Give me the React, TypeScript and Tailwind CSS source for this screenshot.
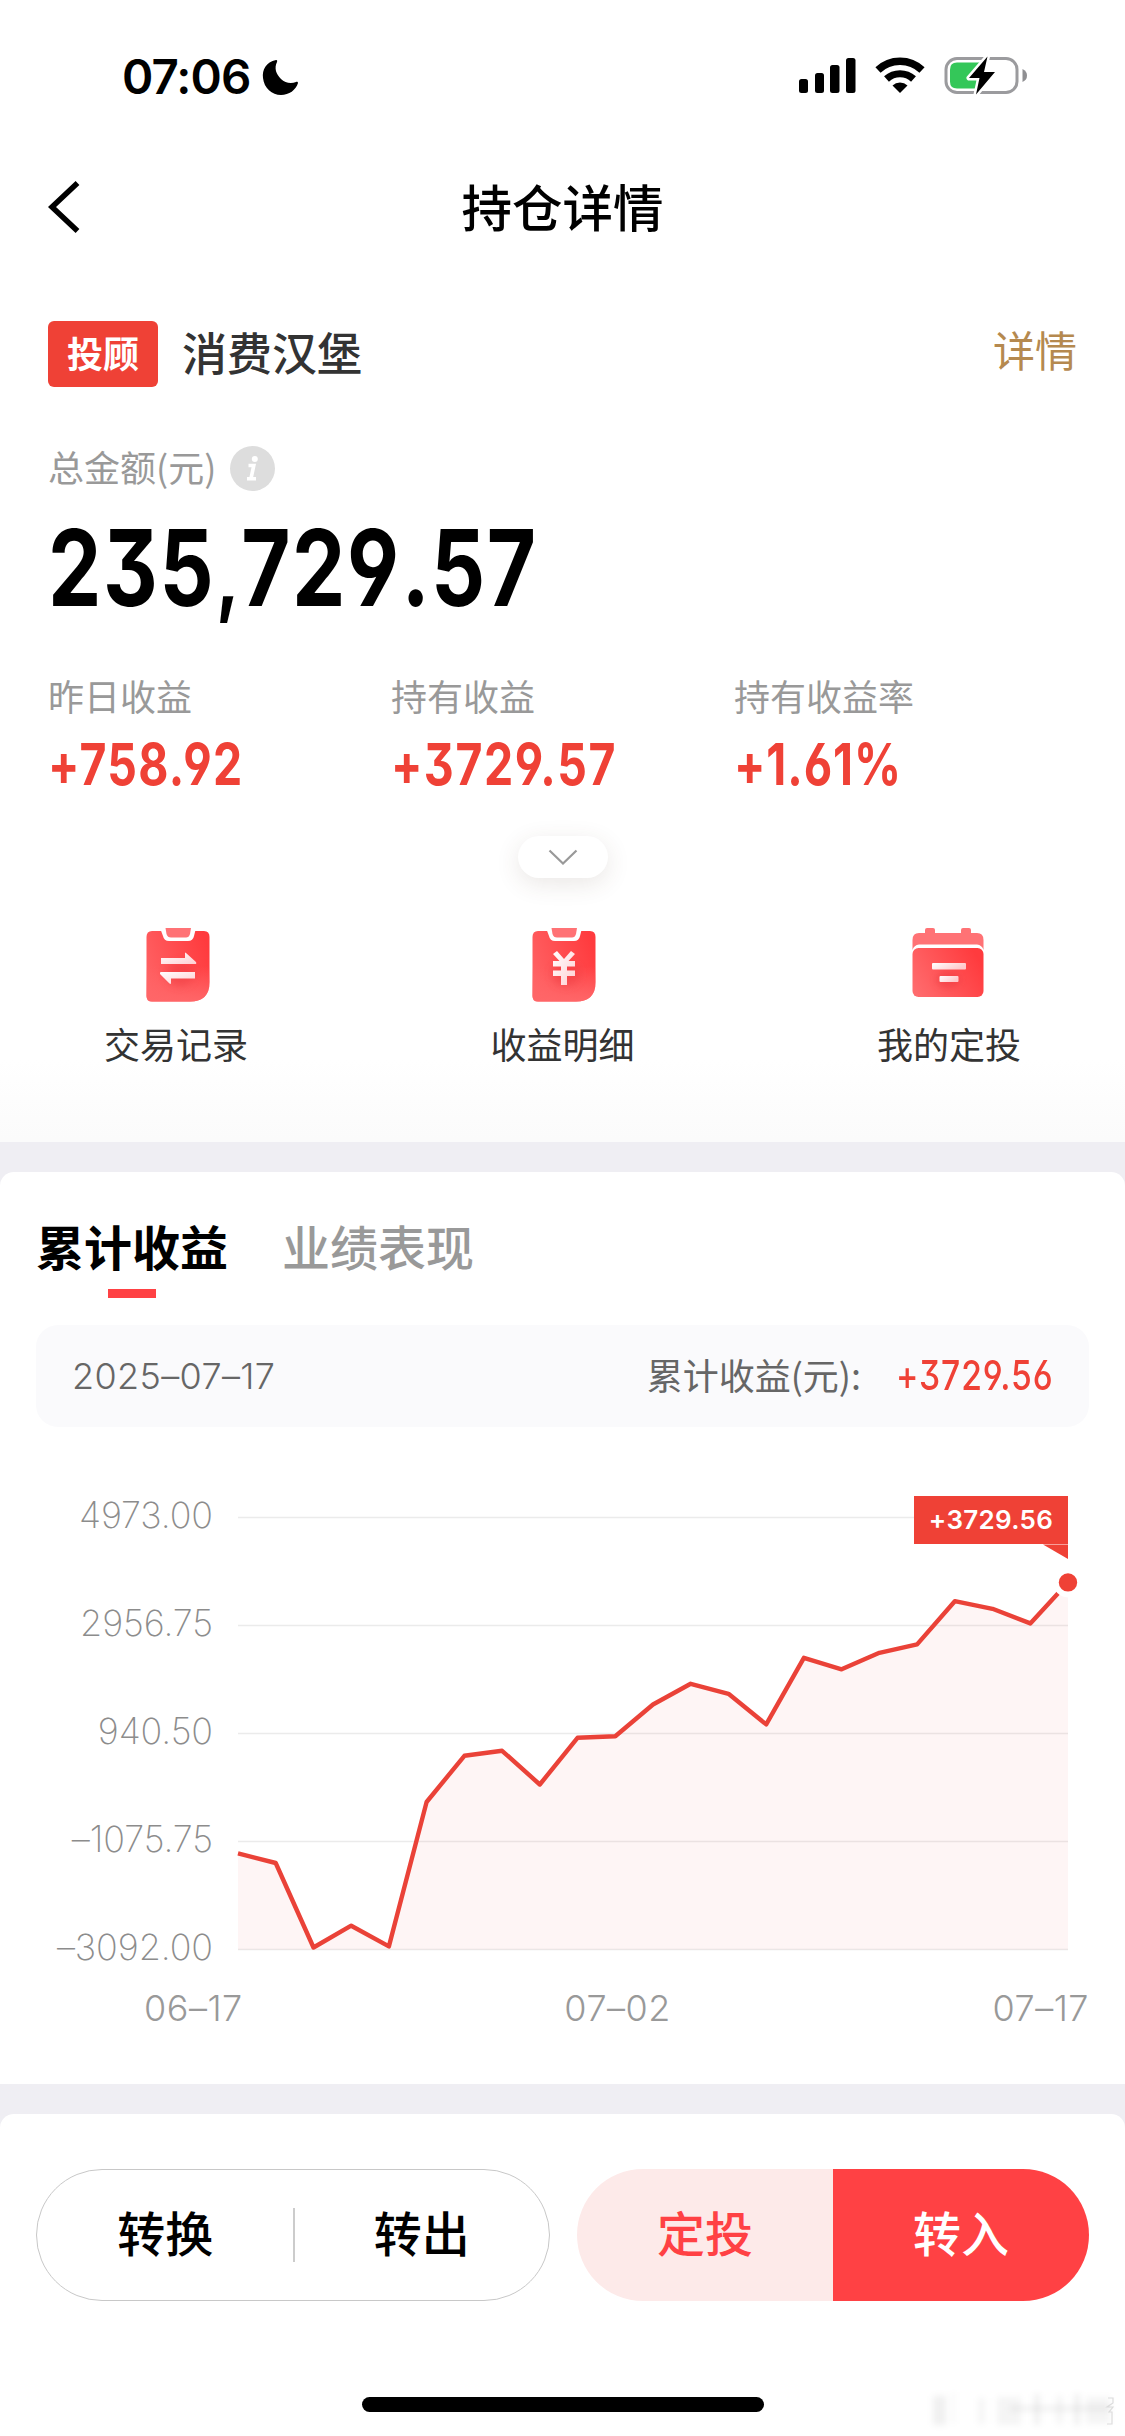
import type { ReactNode } from 'react';

const stats = [
  { label: '昨日收益', value: '+758.92', tracking: 'tracking-[1.6px]' },
  { label: '持有收益', value: '+3729.57', tracking: 'tracking-[2px]' },
  { label: '持有收益率', value: '+1.61%', tracking: 'tracking-[1.1px]' },
];

const yLabels = ['4973.00', '2956.75', '940.50', '–1075.75', '–3092.00'];

const CHART = { left: 238, right: 1068, top: 45.5, step: 108 };

// y offsets of the daily points, inside the chart area
const points = [
  381.4, 391, 475.5, 453.7, 474.4, 330, 283.8, 278.8, 312.5, 265.8, 264.3, 232.5,
  211.8, 221.8, 252.4, 185.8, 197.3, 180.8, 172.4, 129.2, 136.8, 151.4, 110.4,
];

const StatusBar = () => (
  <div className="flex h-[132px] items-start justify-between pl-[122px] pr-[97px] pt-[56px]">
    <div className="flex items-center">
      <span className="w-[139px] whitespace-nowrap pt-px font-['Inter'] text-[47.5px] font-[560] leading-[40px] tracking-[-0.9px]">
        07:06
      </span>
      <svg className="h-[38px] w-[38px]" viewBox="0 0 38 38">
        <path d="M15 2 C5 4 1 12 2 20 C3 30 11 37 20 37 C28 37 35 32 37 25 C37 24 36 23.500 35 24 C30 26 24 25 20 21 C15 16 13 10 16 4 C16.500 2.500 16 1.800 15 2Z" />
      </svg>
    </div>
    <div className="flex items-center">
      <svg className="h-[40px] w-[58px]" viewBox="0 0 58 40">
        <rect x="0" y="23" width="9" height="14" rx="2.500" />
        <rect x="16" y="17" width="9" height="20" rx="2.500" />
        <rect x="31" y="9" width="9.500" height="28" rx="2.500" />
        <rect x="47" y="2" width="9.500" height="35" rx="2.500" />
      </svg>
      <svg className="ml-[18px] h-[40px] w-[52px]" viewBox="0 0 52 40">
        <path d="M3 14 A32 32 0 0 1 47 14" fill="none" stroke="#000" strokeWidth="7.500" />
        <path d="M11.500 23 A20 20 0 0 1 38.500 23" fill="none" stroke="#000" strokeWidth="7.200" />
        <path d="M25 37 L17.500 29.500 A11 11 0 0 1 32.500 29.500Z" />
      </svg>
      <svg className="ml-[17px] h-[40px] w-[84px]" viewBox="0 0 84 40">
        <rect x="2" y="2.500" width="71" height="34" rx="11" fill="none" stroke="#9b9b9e" strokeWidth="3" />
        <path d="M78.500 13 Q83 15 83 19.500 Q83 24 78.500 26Z" fill="#8f8f92" />
        <path d="M13 6.500 H36 V32.500 H13 Q6 32.500 6 25.500 V13.500 Q6 6.500 13 6.500Z" fill="#34c759" />
        <path
          d="M43.500 0.500 L25 22 H35.500 L32 38.500 L51 16 H40Z"
          stroke="#fff"
          strokeWidth="5"
          strokeLinejoin="round"
          paintOrder="stroke"
        />
      </svg>
    </div>
  </div>
);

const ClipboardIcon = ({ id, children }: { id: string; children: ReactNode }) => (
  <svg className="ml-[3px] h-[74px] w-[64px]" viewBox="0 0 64 74">
    <defs>
      <linearGradient id={`${id}-body`} x1="0" y1="0.700" x2="1" y2="0.300">
        <stop offset="0" stopColor="#ff6264" />
        <stop offset="1" stopColor="#ff3b3e" />
      </linearGradient>
      <linearGradient id={`${id}-base`} x1="0" y1="0" x2="0" y2="1">
        <stop offset="0.500" stopColor="#ff6668" stopOpacity="0" />
        <stop offset="1" stopColor="#ff6668" />
      </linearGradient>
      <linearGradient id={`${id}-mark`} x1="0" y1="0" x2="1" y2="1">
        <stop offset="0" stopColor="#fff" />
        <stop offset="1" stopColor="#ffcfd2" />
      </linearGradient>
      <filter id={`${id}-blur`} x="-50%" y="-50%" width="200%" height="200%">
        <feGaussianBlur stdDeviation="4" />
      </filter>
    </defs>
    <path d="M6 3H58Q63.500 3 63.500 9V54Q63.500 73.500 44 73.500H6Q0.500 73.500 0.500 68V9Q0.500 3 6 3Z" fill={`url(#${id}-body)`} />
    <path d="M6 3H58Q63.500 3 63.500 9V54Q63.500 73.500 44 73.500H6Q0.500 73.500 0.500 68V9Q0.500 3 6 3Z" fill={`url(#${id}-base)`} />
    <path d="M14 0H50L48 8Q47 13 42 13H23Q18 13 17 8Z" fill="#fff" />
    <path d="M19.500 0H45L44 6Q43 9.500 40 9.500H25Q21.500 9.500 20.500 6Z" fill="#ff7275" />
    <ellipse cx="34" cy="46" rx="14" ry="12" fill="#e8343b" opacity="0.450" filter={`url(#${id}-blur)`} />
    <g fill={`url(#${id}-mark)`}>{children}</g>
  </svg>
);

const CalendarIcon = () => (
  <svg className="mr-[2px] h-[74px] w-[72px]" viewBox="0 0 72 74">
    <defs>
      <linearGradient id="cal-body" x1="0" y1="0.800" x2="1" y2="0.400">
        <stop offset="0" stopColor="#ff6b6d" />
        <stop offset="1" stopColor="#ff3b3e" />
      </linearGradient>
      <linearGradient id="cal-mark" x1="0" y1="0" x2="1" y2="0.400">
        <stop offset="0" stopColor="#fff" />
        <stop offset="1" stopColor="#ffc9cc" />
      </linearGradient>
      <filter id="cal-blur" x="-50%" y="-50%" width="200%" height="200%">
        <feGaussianBlur stdDeviation="3.500" />
      </filter>
    </defs>
    <path
      d="M13 5V2Q13 0 15 0H21Q23 0 23 2V5H49V2Q49 0 51 0H57Q59 0 59 2V5H65Q71.500 5 71.500 12V22Q70 17 65 16.500H7Q2 17 0.500 22V12Q0.500 5 7 5Z"
      fill="#ff7275"
    />
    <rect x="0.500" y="20" width="71" height="49" rx="6" fill="url(#cal-body)" />
    <ellipse cx="36" cy="52" rx="12" ry="8" fill="#e8343b" opacity="0.450" filter="url(#cal-blur)" />
    <rect x="20" y="35" width="34" height="6.500" rx="1" fill="url(#cal-mark)" />
    <rect x="27.500" y="48" width="19" height="6" rx="1" fill="url(#cal-mark)" />
  </svg>
);

const Action = ({ label, children }: { label: string; children: ReactNode }) => (
  <div className="flex w-[144px] flex-col items-center">
    {children}
    <span className="mt-[14px] whitespace-nowrap text-[36px] leading-[54px] text-[#333]">{label}</span>
  </div>
);

const Chart = () => {
  const stepX = (CHART.right - CHART.left) / (points.length - 1);
  const line = points.map((y, i) => `${(CHART.left + i * stepX).toFixed(1)},${y}`).join(' ');
  const bottom = CHART.top + CHART.step * 4;

  return (
    <div className="relative h-[500px]">
      <svg className="absolute inset-0 h-[500px] w-[1125px]" viewBox="0 0 1125 500">
        {yLabels.map((label, i) => (
          <line
            key={label}
            x1={CHART.left}
            x2={CHART.right}
            y1={CHART.top + i * CHART.step}
            y2={CHART.top + i * CHART.step}
            stroke="#ebebeb"
            strokeWidth="1.500"
          />
        ))}
        <polygon
          points={`${CHART.left},${bottom} ${line} ${CHART.right},${bottom}`}
          fill="#ef4136"
          fillOpacity="0.05"
        />
        <polyline points={line} fill="none" stroke="#ea4238" strokeWidth="4.400" strokeLinejoin="round" />
        <circle cx={CHART.right} cy="110.400" r="15" fill="#fff" />
        <circle cx={CHART.right} cy="110.400" r="9.200" fill="#ef4136" />
        <path d="M1043 72.500H1068V87Z" fill="#ef4136" />
      </svg>
      <div className="absolute right-[57px] top-[23.5px] flex h-[48px] w-[154px] items-center justify-center bg-[#ef4136] pb-[1px] font-['Inter'] text-[26px] font-semibold tracking-[0.3px] text-white">
        +3729.56
      </div>
      <div className="flex w-[213px] flex-col text-right font-['Inter'] text-[36px] font-extralight leading-[108px] text-[#8c8c8c]">
        {yLabels.map((label) => (
          <span key={label} className="-mt-[11px] mb-[11px] whitespace-nowrap tracking-[-0.1px]">
            {label}
          </span>
        ))}
      </div>
    </div>
  );
};

export default function App() {
  return (
    <div className="flex h-[2436px] w-[1125px] flex-col overflow-hidden bg-[#efeef3] font-['Noto_Sans_CJK_SC',sans-serif] text-black">
      <section className="h-[1142px] bg-[linear-gradient(#fff_1060px,#fbfbfb_1138px)]">
        <StatusBar />

        <header className="grid h-[150px] grid-cols-3 items-center px-[48px]">
          <svg className="h-[54px] w-[32px]" viewBox="0 0 32 54">
            <path d="M29.500 3 L4 27 L29.500 51" fill="none" stroke="#000" strokeWidth="5.500" />
          </svg>
          <h1 className="pb-[5px] text-center text-[50.5px] font-medium leading-[60px]">持仓详情</h1>
        </header>

        <div className="flex h-[144px] items-center px-[48px]">
          <span className="flex h-[66px] w-[110px] items-center justify-center rounded-[6px] bg-[#ef4136] pb-[4px] text-[36px] font-bold text-white">
            投顾
          </span>
          <span className="ml-[24px] pb-[5px] text-[45px] font-medium text-[#333]">消费汉堡</span>
          <span className="ml-auto pb-[11px] text-[42px] text-[#b5894f]">详情</span>
        </div>

        <div className="flex h-[84px] items-center px-[48px] text-[#999]">
          <span className="pb-[5px] text-[36px]">总金额(元)</span>
          <span className="ml-[14px] flex h-[45px] w-[45px] items-center justify-center rounded-full bg-[#ddd]">
            <svg className="h-[25px] w-[14px]" viewBox="0 0 14 25">
              <circle cx="8.800" cy="3" r="3" fill="#fff" />
              <path d="M2.500 9.500H7.800L5 22.500M1 22.700H10" fill="none" stroke="#fff" strokeWidth="3.600" />
            </svg>
          </span>
        </div>

        <div className="h-[160px] px-[48px] pt-[2px]">
          <div className="w-max origin-left scale-x-[0.80] font-['Inter'] text-[106px] font-bold leading-[112px] tracking-[2px] [font-feature-settings:'cv03','cv04','cv09']">
            235<span className="pl-[1px] text-[88px]">,</span>729<span className="pl-[1px]">.</span>57
          </div>
        </div>

        <div className="grid grid-cols-3 px-[48px]">
          {stats.map((s) => (
            <div key={s.label}>
              <div className="text-[36px] leading-[50px] text-[#999]">{s.label}</div>
              <div
                className={`mt-[1px] w-max origin-left scale-x-[0.80] font-['Inter'] text-[58px] font-[650] leading-[86px] text-[#ef4136] [font-feature-settings:'cv03','cv04','cv09'] ${s.tracking}`}
              >
                {s.value}
              </div>
            </div>
          ))}
        </div>

        <div className="mt-[29px] flex justify-center">
          <button className="flex h-[42px] w-[90px] items-center justify-center rounded-full bg-white shadow-[0_6px_24px_rgba(80,60,40,0.12)]">
            <svg className="h-[16px] w-[30px]" viewBox="0 0 30 16">
              <path d="M1.500 1.500L15 14.500L28.500 1.500" fill="none" stroke="#999" strokeWidth="2.200" />
            </svg>
          </button>
        </div>

        <div className="mt-[50px] flex justify-between px-[104px]">
          <Action label="交易记录">
            <ClipboardIcon id="trade">
              <path d="M15 30H39V25Q39 24 40 25L50 34Q51 36 49 36H15Z" />
              <path d="M49 44V50.500H25V55Q25 56.500 23.500 55.500L14 46Q13.500 44 15 44Z" />
            </ClipboardIcon>
          </Action>
          <Action label="收益明细">
            <ClipboardIcon id="income">
              <path d="M21 26L25 23L32 31L39 23L43 26L36.500 33H43V38.500H35V42.500H43V48H35V57H29V48H21V42.500H29V38.500H21V33H27.500Z" />
            </ClipboardIcon>
          </Action>
          <Action label="我的定投">
            <CalendarIcon />
          </Action>
        </div>
      </section>

      <section className="mt-[30px] h-[912px] rounded-t-[14px] bg-white">
        <div className="flex h-[153px] gap-[54px] px-[36px] pt-[37px] text-[48px] font-medium leading-[72px]">
          <div className="flex flex-col items-center">
            <span className="font-bold">累计收益</span>
            <span className="mt-[8px] h-[9px] w-[48px] bg-[#ff4144]" />
          </div>
          <span className="text-[#999]">业绩表现</span>
        </div>

        <div className="mx-[36px] flex h-[102px] items-center rounded-[22px] bg-[#fafafc] px-[36px] text-[36px] text-[#666]">
          <span className="pb-[1px] font-['Inter'] font-light tracking-[0.35px]">2025–07–17</span>
          <span className="ml-auto pb-[4px]">累计收益(元):</span>
          <span className="ml-[35px] w-[157px]">
            <span className="block w-max origin-left scale-x-[0.82] font-['Inter'] text-[41px] font-medium tracking-[1.1px] text-[#ef4136] [font-feature-settings:'cv03','cv04','cv09']">
              +3729.56
            </span>
          </span>
        </div>

        <div className="pt-[45px]">
          <Chart />
        </div>

        <div className="flex justify-between pl-[144px] pr-[36px] pt-[14px] font-['Inter'] text-[36px] font-light leading-[44px] tracking-[0.5px] text-[#999]">
          <span>06–17</span>
          <span>07–02</span>
          <span>07–17</span>
        </div>
      </section>

      <section className="mt-[30px] flex h-[322px] flex-col rounded-t-[14px] bg-white">
        <div className="flex justify-between px-[36px] pt-[55px] text-[48px] font-medium">
          <div className="flex h-[132px] w-[514px] items-center rounded-full border border-[#c8c8c8]">
            <button className="flex-1 pb-[9px] pl-[1px]">转换</button>
            <span className="h-[54px] w-[2px] bg-[#ccc]" />
            <button className="flex-1 pb-[9px]">转出</button>
          </div>
          <div className="flex h-[132px] w-[512px] overflow-hidden rounded-full">
            <button className="flex-1 bg-[#fdeae9] pb-[9px] text-[#ff4144]">定投</button>
            <button className="flex-1 bg-[#ff4144] pb-[9px] text-white">转入</button>
          </div>
        </div>

        <div className="mt-auto grid h-[66px] grid-cols-[362px_402px_1fr]">
          <span />
          <span className="mt-[27px] h-[15px] rounded-full bg-black" />
          <svg className="ml-auto h-[66px] w-[225px]" viewBox="0 0 225 66">
            <defs>
              <filter id="soft" x="-20%" y="-20%" width="140%" height="140%">
                <feGaussianBlur stdDeviation="3" />
              </filter>
            </defs>
            <g filter="url(#soft)" fill="#000">
              <rect x="33" y="26" width="13" height="29" opacity="0.060" />
              <rect x="52" y="22" width="3" height="32" opacity="0.030" />
              <rect x="78" y="28" width="7" height="26" opacity="0.040" />
              <rect x="97" y="27" width="24" height="28" opacity="0.040" />
              <rect x="134" y="24" width="6" height="31" opacity="0.060" />
              <rect x="156" y="26" width="7" height="28" opacity="0.040" />
              <rect x="174" y="24" width="6" height="31" opacity="0.060" />
              <rect x="110" y="36" width="100" height="5" opacity="0.060" />
              <rect x="186" y="27" width="24" height="27" opacity="0.040" />
            </g>
            <path d="M208 28H213V33L207 37H213L209 42H212V54H207" fill="none" stroke="#dcdcdc" strokeWidth="1.200" />
          </svg>
        </div>
      </section>
    </div>
  );
}
